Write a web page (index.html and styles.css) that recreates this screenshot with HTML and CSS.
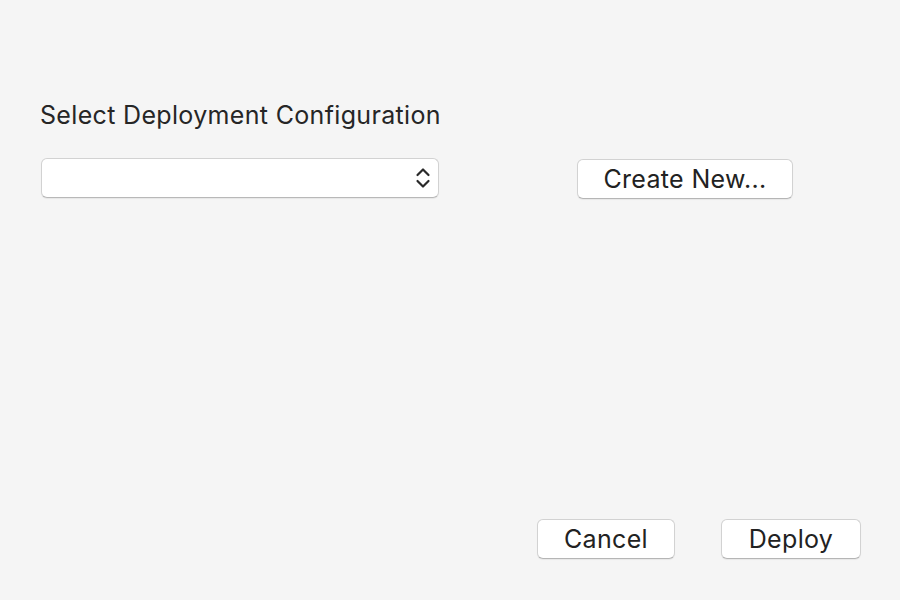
FILE: index.html
```html
<!DOCTYPE html>
<html>
<head>
<meta charset="utf-8">
<link rel="stylesheet" href="styles.css">
</head>
<body>
<div class="dialog">
  <div class="title">Select Deployment Configuration</div>
  <div class="config-row">
    <div class="select">
      <svg class="chevrons" width="16" height="26" viewBox="0 0 16 26">
        <path d="M2.5 10 L8 4.5 L13.5 10" fill="none" stroke="#2a2a2a" stroke-width="2.2" stroke-linecap="round" stroke-linejoin="round"/>
        <path d="M2.5 16 L8 21.5 L13.5 16" fill="none" stroke="#2a2a2a" stroke-width="2.2" stroke-linecap="round" stroke-linejoin="round"/>
      </svg>
    </div>
    <button class="btn btn-create">Create New...</button>
  </div>
  <div class="spacer"></div>
  <div class="actions">
    <button class="btn btn-cancel">Cancel</button>
    <button class="btn btn-deploy">Deploy</button>
  </div>
</div>
</body>
</html>
```
FILE: styles.css
```css
html, body {
  margin: 0;
  padding: 0;
  background: #f5f5f5;
}
body {
  font-family: Inter, "Liberation Sans", Arial, sans-serif;
  color: #222;
}
.dialog {
  width: 900px;
  height: 600px;
  box-sizing: border-box;
  padding: 99px 39px 41px 41px;
  display: flex;
  flex-direction: column;
}
.title {
  font-size: 25px;
  letter-spacing: 0.33px;
  line-height: 32px;
  margin-left: -1px;
  color: #262626;
}
.config-row {
  display: flex;
  align-items: flex-start;
  margin-top: 27px;
}
.select {
  width: 398px;
  height: 40px;
  box-sizing: border-box;
  background: #fff;
  border: 1px solid #d2d2d2;
  border-bottom-color: #b8b8b8;
  border-radius: 6px;
  box-shadow: 0 1px 1px rgba(0,0,0,0.06);
  display: flex;
  align-items: center;
  justify-content: flex-end;
  padding-right: 7px;
}
.chevrons {
  display: block;
}
.btn {
  font-family: Inter, "Liberation Sans", Arial, sans-serif;
  font-size: 25px;
  letter-spacing: 0.33px;
  color: #222;
  background: #fff;
  border: 1px solid #d2d2d2;
  border-bottom-color: #b5b5b5;
  border-radius: 6px;
  box-shadow: 0 1px 1px rgba(0,0,0,0.06);
  height: 40px;
  padding: 0;
  box-sizing: border-box;
  line-height: 36px;
}
.btn-create {
  width: 216px;
  margin-left: 138px;
  margin-top: 1px;
}
.spacer {
  flex: 1;
}
.actions {
  display: flex;
  justify-content: flex-end;
  gap: 46px;
}
.btn-cancel {
  width: 138px;
}
.btn-deploy {
  width: 140px;
}
```
